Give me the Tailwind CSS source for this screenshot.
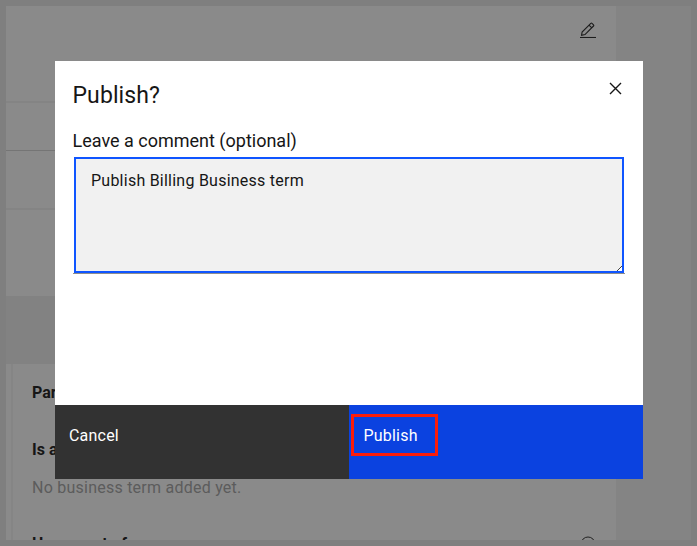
<!DOCTYPE html>
<html lang="en">
<head>
<meta charset="utf-8">
<title>Publish</title>
<script src="https://cdn.jsdelivr.net/npm/@tailwindcss/browser@4"></script>
</head>
<body class="font-['Roboto',sans-serif]">
<div class="relative h-[546px] w-[697px] overflow-hidden bg-[#7f7f7f] p-1.5 text-[#161616]">
  <main class="flex h-[534px] w-[685px] overflow-hidden bg-[#848484]">
    <section class="flex w-[610px] flex-col bg-[#8a8a8a]">
      <div class="flex h-[97px] shrink-0 justify-end border-b-2 border-[#848484] pt-4 pr-5">
        <svg class="size-4" viewBox="0 0 16 16" fill="none" stroke="#1c1c1c" stroke-width="1.1"><path d="M0 15.500h16"/><path d="m1.600 13.200.5-3.200L10.800 1.300q.6-.5 1.200 0l1.500 1.500q.6.600 0 1.200L5 12.600zM9 3.100l2.800 2.800"/></svg>
      </div>
      <div class="h-12 shrink-0 border-b border-[#757575]"></div>
      <div class="h-[59px] shrink-0 border-b-2 border-[#848484]"></div>
      <div class="h-[86px] shrink-0"></div>
      <div class="h-[68px] shrink-0 bg-[#828282]"></div>
      <div class="ml-[5px] flex h-[176px] flex-col overflow-hidden border-l-2 border-[#858585] pl-[19px] text-[16px] leading-5">
        <h3 class="mt-[19px] shrink-0 font-bold">Parent</h3>
        <h3 class="mt-[37px] shrink-0 font-bold">Is a type of</h3>
        <p class="mt-[18px] shrink-0 tracking-[0.24px] text-[#5c5c5c]">No business term added yet.</p>
        <div class="mt-[36px] flex shrink-0 justify-between pr-5">
          <h3 class="font-bold tracking-[0.2px]">Has a part of</h3>
          <svg class="mt-[2px] size-4" viewBox="0 0 16 16" fill="none" stroke="#222"><circle cx="8" cy="8" r="7"/><path d="M8 4v1M8 7v5"/></svg>
        </div>
      </div>
    </section>
  </main>
  <div role="dialog" class="absolute top-[61px] left-[55px] flex h-[418px] w-[588px] flex-col bg-white">
    <div class="flex h-[68px] justify-between pt-5 pr-5 pl-[17.500px]">
      <h2 class="text-[23px] leading-[30px] tracking-[0.1px]">Publish?</h2>
      <svg class="size-[15px]" viewBox="0 0 15 15" fill="none" stroke="#161616" stroke-width="1.4"><path d="m2 2 11 11M13 2 2 13"/></svg>
    </div>
    <label for="comment" class="ml-[17.500px] h-7 text-[18px] leading-6">Leave a comment (optional)</label>
    <div class="ml-[18px] h-[117px] w-[552px] border-b border-[#8d8d8d] pl-px">
      <div class="relative h-[116px] w-[550px] border-2 border-[#0f55ff] bg-[#f1f1f1] pt-3 pl-[15px]">
        <p id="comment" class="text-[16px] leading-5 tracking-[0.24px]">Publish Billing Business term</p>
        <svg class="absolute right-0 bottom-0 size-[5px]" viewBox="0 0 5 5"><path d="M5 0v5H0z" fill="#fff"/><path d="M0 5 5 0" stroke="#444"/></svg>
      </div>
    </div>
    <div class="mt-auto flex h-[74px] text-[16px] leading-5 tracking-[0.2px] text-white">
      <button class="flex w-[294px] bg-[#323232] pt-[21px] pl-3.5">Cancel</button>
      <button class="flex w-[294px] bg-[#0b42e0] pt-[9px] pl-0.5">
        <span class="h-[42px] w-[87px] border-[3px] border-[#fc1c0c] pt-[9px] pl-[9.500px] text-left">Publish</span>
      </button>
    </div>
  </div>
</div>
</body>
</html>
